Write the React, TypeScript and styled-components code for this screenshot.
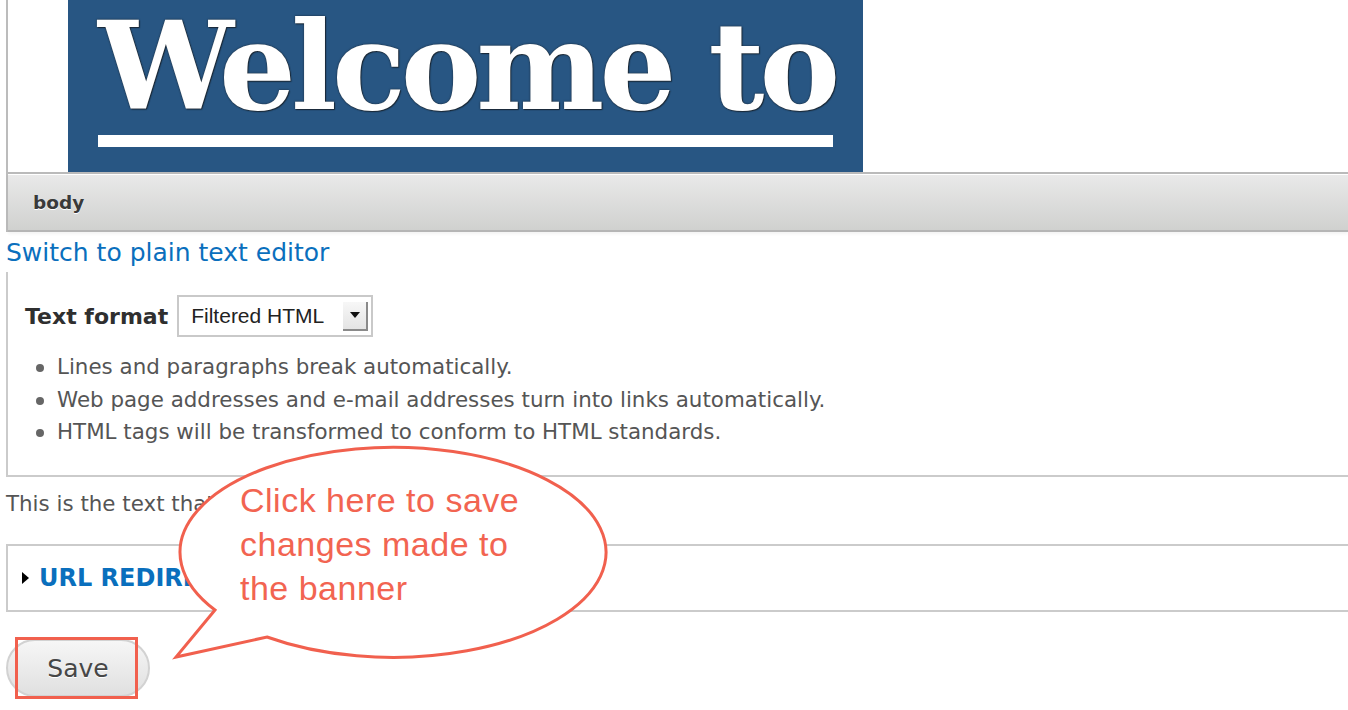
import React from "react";
import styled, { createGlobalStyle } from "styled-components";

const GlobalStyle = createGlobalStyle`
  html, body {
    margin: 0;
    padding: 0;
    background: #ffffff;
  }
  body {
    font-family: "DejaVu Sans", "Liberation Sans", sans-serif;
    overflow: hidden;
  }
  * { box-sizing: border-box; }
`;

const Page = styled.div`
  position: relative;
  width: 1348px;
  height: 710px;
  padding-left: 6px;
  overflow: hidden;
`;

const EditorFrame = styled.div`
  border-left: 2px solid #bcbcbc;
`;

const EditorCanvas = styled.div`
  height: 174px;
  padding-left: 60px;
  border-bottom: 2px solid #bababa;
  background: #ffffff;
`;

const Banner = styled.div`
  width: 795px;
  height: 172px;
  background: #285683;
  padding-left: 30px;
  display: flex;
  flex-direction: column;
`;

const BannerTitle = styled.div`
  margin-top: -5px;
  font-family: "DejaVu Serif", "Liberation Serif", serif;
  font-weight: 700;
  font-size: 121px;
  line-height: normal;
  color: #ffffff;
  white-space: nowrap;
  letter-spacing: -5px;
  text-shadow: 0 0 2px rgba(20, 20, 20, 0.8), 1px 1px 1px rgba(20, 20, 20, 0.6);
`;

const BannerRule = styled.div`
  width: 735px;
  height: 12px;
  margin-top: -3px;
  background: #ffffff;
`;

const Toolbar = styled.div`
  height: 58px;
  border-top: 1px solid #ffffff;
  border-bottom: 2px solid #b5b5b5;
  background: linear-gradient(to bottom, #e9e9e9, #d0d1cf);
  box-shadow: 0 2px 3px rgba(0, 0, 0, 0.05);
  display: flex;
  align-items: center;
  padding-left: 25px;
  font-weight: 700;
  font-size: 18.5px;
  color: #3a3a3a;
  text-shadow: 0 1px 0 #ffffff;
`;

const SwitchLink = styled.a`
  display: block;
  margin-top: 6px;
  font-size: 25px;
  line-height: 30px;
  color: #0a6fbd;
  text-decoration: none;
  white-space: nowrap;
`;

const FormatFieldset = styled.div`
  margin-top: 4px;
  border-left: 2px solid #cbcbcb;
  border-bottom: 2px solid #cbcbcb;
  padding: 23px 0 26px 17px;
`;

const FormatRow = styled.div`
  display: flex;
  align-items: center;
  gap: 9px;
  height: 42px;
`;

const FormatLabel = styled.span`
  font-weight: 700;
  font-size: 22px;
  color: #2f2f2f;
`;

const SelectBox = styled.div`
  width: 196px;
  height: 42px;
  border: 2px solid #c9c9c9;
  background: #ffffff;
  display: flex;
  align-items: center;
  justify-content: space-between;
  padding: 0 3px 0 12px;
  font-family: "Liberation Sans", Arial, sans-serif;
  font-size: 21px;
  color: #222222;
`;

const SelectArrow = styled.div`
  width: 25px;
  height: 29px;
  background: linear-gradient(to bottom, #f7f7f7, #e4e4e4);
  border-right: 2px solid #8a8a8a;
  border-bottom: 2px solid #8a8a8a;
  display: flex;
  align-items: center;
  justify-content: center;
  &::after {
    content: "";
    width: 0;
    height: 0;
    border-left: 5px solid transparent;
    border-right: 5px solid transparent;
    border-top: 6px solid #111111;
  }
`;

const HelpList = styled.ul`
  list-style: none;
  margin: 14px 0 0 0;
  padding: 0 0 0 32px;
`;

const HelpItem = styled.li`
  position: relative;
  font-size: 21.4px;
  line-height: 32.5px;
  color: #555555;
  white-space: nowrap;
  &::before {
    content: "";
    position: absolute;
    left: -21px;
    top: 13px;
    width: 8px;
    height: 8px;
    border-radius: 50%;
    background: #666666;
  }
`;

const Description = styled.p`
  margin: 11px 0 0 0;
  font-size: 21.4px;
  line-height: 32.5px;
  color: #555555;
  white-space: nowrap;
`;

const RedirectFieldset = styled.div`
  margin-top: 24px;
  height: 68px;
  border-top: 2px solid #cbcbcb;
  border-bottom: 2px solid #cbcbcb;
  border-left: 2px solid #cbcbcb;
  display: flex;
  align-items: center;
  gap: 10px;
  padding-left: 14px;
`;

const Disclosure = styled.span`
  width: 0;
  height: 0;
  border-top: 6px solid transparent;
  border-bottom: 6px solid transparent;
  border-left: 7px solid #000000;
`;

const RedirectLink = styled.a`
  font-weight: 700;
  font-size: 24px;
  color: #0a6fbd;
  text-decoration: none;
  white-space: nowrap;
`;

const SaveWrap = styled.div`
  position: relative;
  margin-top: 27px;
  width: 144px;
  height: 58px;
`;

const SaveButton = styled.button`
  width: 144px;
  height: 58px;
  border: 2px solid #d2d2d2;
  border-radius: 29px;
  background: linear-gradient(to bottom, #f6f6f6, #e0e0e0);
  font-family: "DejaVu Sans", sans-serif;
  font-size: 25px;
  color: #474747;
  padding: 0;
  text-shadow: 0 1px 0 #ffffff;
`;

const Highlight = styled.div`
  position: absolute;
  left: 9px;
  top: -2px;
  width: 123px;
  height: 62px;
  border: 3.5px solid #f1604e;
  pointer-events: none;
`;

const Callout = styled.div`
  position: absolute;
  left: 170px;
  top: 440px;
  width: 440px;
  height: 225px;
`;

const CalloutShape = styled.svg`
  position: absolute;
  left: 0;
  top: 0;
`;

const CalloutText = styled.div`
  position: absolute;
  left: 70px;
  top: 38px;
  font-family: "Liberation Sans", Arial, sans-serif;
  font-size: 34px;
  line-height: 44px;
  letter-spacing: 0.5px;
  color: #f26451;
  white-space: nowrap;
`;

export default function App() {
  return (
    <>
      <GlobalStyle />
      <Page>
        <EditorFrame>
          <EditorCanvas>
            <Banner>
              <BannerTitle>Welcome to</BannerTitle>
              <BannerRule />
            </Banner>
          </EditorCanvas>
          <Toolbar>body</Toolbar>
        </EditorFrame>
        <SwitchLink href="#">Switch to plain text editor</SwitchLink>
        <FormatFieldset>
          <FormatRow>
            <FormatLabel>Text format</FormatLabel>
            <SelectBox>
              <span>Filtered HTML</span>
              <SelectArrow />
            </SelectBox>
          </FormatRow>
          <HelpList>
            <HelpItem>Lines and paragraphs break automatically.</HelpItem>
            <HelpItem>Web page addresses and e-mail addresses turn into links automatically.</HelpItem>
            <HelpItem>HTML tags will be transformed to conform to HTML standards.</HelpItem>
          </HelpList>
        </FormatFieldset>
        <Description>This is the text that appears in the banner.</Description>
        <RedirectFieldset>
          <Disclosure />
          <RedirectLink href="#">URL REDIRECTS</RedirectLink>
        </RedirectFieldset>
        <SaveWrap>
          <SaveButton>Save</SaveButton>
          <Highlight />
        </SaveWrap>
        <Callout>
          <CalloutShape width="440" height="225" viewBox="170 440 440 225">
            <path
              d="M 215 610 L 176 657 L 267 637 A 213 105 0 1 0 215 610 Z"
              fill="#ffffff"
              stroke="#f1604e"
              strokeWidth="3"
              strokeLinejoin="miter"
            />
          </CalloutShape>
          <CalloutText>
            Click here to save
            <br />
            changes made to
            <br />
            the banner
          </CalloutText>
        </Callout>
      </Page>
    </>
  );
}
